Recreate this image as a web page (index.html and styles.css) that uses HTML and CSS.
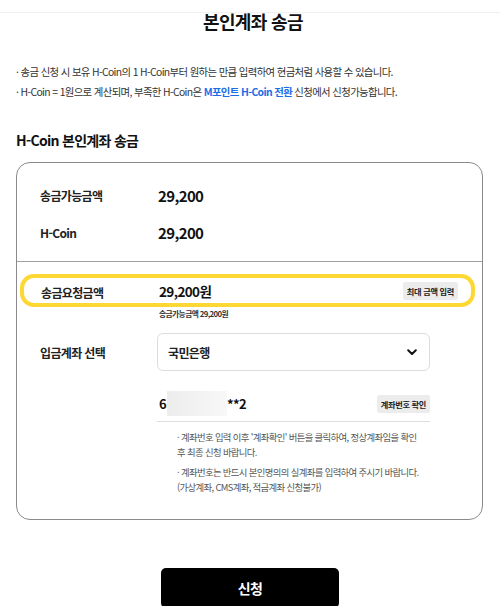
FILE: index.html
```html
<!DOCTYPE html>
<html lang="ko">
<head>
<meta charset="utf-8">
<title>본인계좌 송금</title>
<link rel="stylesheet" href="styles.css">
</head>
<body>
<div class="topbar"></div>
<h1 class="page-title">본인계좌 송금</h1>
<ul class="intro">
  <li>· 송금 신청 시 보유 H-Coin의 1 H-Coin부터 원하는 만큼 입력하여 현금처럼 사용할 수 있습니다.</li>
  <li>· H-Coin = 1원으로 계산되며, 부족한 H-Coin은 <a class="link">M포인트 H-Coin 전환</a> 신청에서 신청가능합니다.</li>
</ul>
<h2 class="section-title">H-Coin 본인계좌 송금</h2>
<div class="card">
  <div class="summary">
    <div class="row"><span class="label">송금가능금액</span><span class="value">29,200</span></div>
    <div class="row"><span class="label">H-Coin</span><span class="value">29,200</span></div>
  </div>
  <div class="form">
    <div class="highlight">
      <span class="label">송금요청금액</span>
      <span class="value value-sm">29,200원</span>
      <button class="small-btn">최대 금액 입력</button>
    </div>
    <p class="hint">송금가능금액 29,200원</p>
    <div class="select-row">
      <span class="label">입금계좌 선택</span>
      <div class="select">
        <span>국민은행</span>
        <svg class="chevron" width="10" height="7" viewBox="0 0 10 7"><path d="M1.2 1.3 L5 5 L8.8 1.3" fill="none" stroke="#111" stroke-width="2" stroke-linecap="round" stroke-linejoin="round"/></svg>
      </div>
    </div>
    <div class="account">
      <span class="acc-num">6<span class="mask"></span>**2</span>
      <button class="small-btn">계좌번호 확인</button>
    </div>
    <ul class="notes">
      <li>· 계좌번호 입력 이후 '계좌확인' 버튼을 클릭하여, 정상계좌임을 확인<br>후 최종 신청 바랍니다.</li>
      <li>· 계좌번호는 반드시 본인명의의 실계좌를 입력하여 주시기 바랍니다.<br>(가상계좌, CMS계좌, 적금계좌 신청불가)</li>
    </ul>
  </div>
</div>
<div class="actions"><button class="submit">신청</button></div>
</body>
</html>
```
FILE: styles.css
```css
* { box-sizing: border-box; }
html, body { margin: 0; padding: 0; background: #fff; }
body {
  font-family: "Noto Sans CJK KR", "Noto Sans", sans-serif;
  color: #111;
  letter-spacing: -0.04em;
  width: 500px;
}
.topbar {
  height: 12px;
  background: #fff;
  box-shadow: 0 1px 1px rgba(0,0,0,0.05);
}
.page-title {
  margin: 0;
  font-size: 18px;
  line-height: 18px;
  font-weight: 700;
  text-align: center;
  padding-left: 6px;
}
.intro {
  list-style: none;
  margin: 32px 0 0;
  padding: 0 16px;
  font-size: 10.4px;
  line-height: 20px;
  color: #333;
}
.link { color: #1a6ee8; font-weight: 700; }
.section-title {
  margin: 28px 16px 12px;
  font-size: 14px;
  line-height: 20px;
  font-weight: 700;
  letter-spacing: -0.05em;
}
.card {
  margin: 0 17px 0 16px;
  border: 1px solid #8a8a8a;
  border-radius: 14px;
}
.summary {
  padding: 14px 0 10px 23px;
  border-bottom: 1px solid #a0a0a0;
}
.row { display: flex; align-items: center; height: 37px; }
.label { width: 118px; flex: none; font-size: 12px; font-weight: 700; color: #222; }
.value { font-size: 15px; font-weight: 700; }
.value-sm { font-size: 13.5px; }
.form { padding-bottom: 24px; }
.highlight {
  margin: 12px 7px 0 3px;
  height: 33px;
  border: 4px solid #fdd835;
  border-radius: 14px;
  display: flex;
  align-items: center;
  padding: 0 13px 0 17px;
}
.highlight .label { padding-top: 3px; }
.small-btn {
  margin-left: auto;
  height: 18px;
  padding: 0 4px;
  border: none;
  border-radius: 2px;
  background: #ececec;
  font-family: inherit;
  font-size: 8.2px;
  font-weight: 700;
  letter-spacing: -0.04em;
  color: #222;
}
.hint {
  margin: 2px 0 0 142px;
  font-size: 7.8px;
  line-height: 10px;
  font-weight: 700;
  color: #333;
}
.select-row {
  margin-top: 14px;
  padding-left: 23px;
  display: flex;
  align-items: center;
}
.select-row .label { width: 117px; }
.select {
  width: 273px;
  height: 38px;
  border: 1px solid #dcdcdc;
  border-radius: 6px;
  padding: 0 12px 0 10px;
  display: flex;
  align-items: center;
  justify-content: space-between;
  font-size: 12px;
  font-weight: 700;
  color: #222;
}
.account {
  margin: 20px 0 0 140px;
  width: 273px;
  height: 31px;
  padding: 0 0 5px 2px;
  border-bottom: 1px solid #dedede;
  display: flex;
  align-items: center;
}
.acc-num { font-size: 13px; font-weight: 700; display: flex; align-items: center; }
.mask {
  display: inline-block;
  width: 60px;
  height: 25px;
  margin: 0 0 0 1px;
  background: linear-gradient(90deg, #ededed, #f3f3f3 60%, #f8f8f8);
}
.account .small-btn { margin-left: auto; }
.notes {
  list-style: none;
  margin: 8px 0 0 160px;
  padding: 0;
  font-size: 9.4px;
  line-height: 15px;
  color: #555;
}
.notes li + li { margin-top: 5px; }
.actions {
  display: flex;
  justify-content: center;
  margin-top: 48px;
}
.submit {
  width: 178px;
  height: 40px;
  border: none;
  border-radius: 5px;
  background: #000;
  color: #fff;
  font-family: inherit;
  font-size: 14px;
  font-weight: 700;
  letter-spacing: -0.04em;
}
```
